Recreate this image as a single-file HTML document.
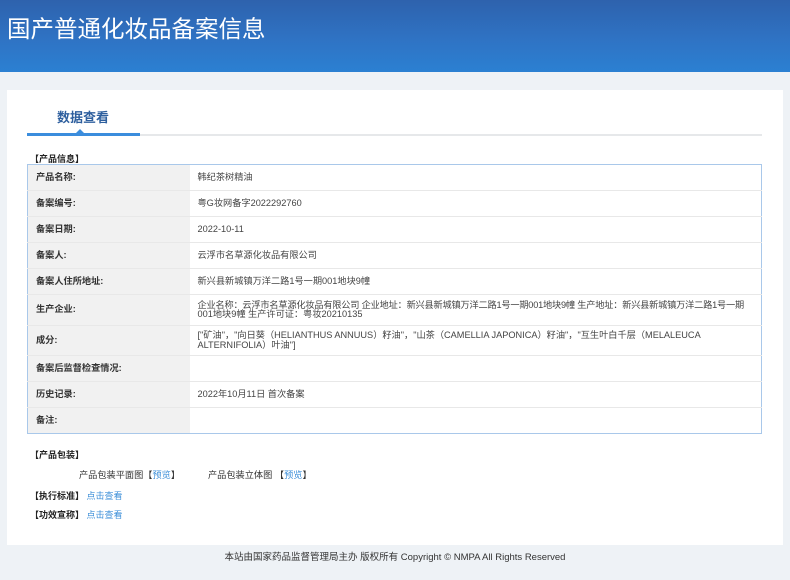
<!DOCTYPE html>
<html><head><meta charset="utf-8">
<style>
*{margin:0;padding:0;box-sizing:border-box}
body{width:790px;height:580px;overflow:hidden;background:#eef2f6;font-family:"Liberation Sans","Noto Sans CJK SC",sans-serif;color:#333;position:relative}
.hd{position:absolute;left:0;top:0;width:790px;height:72px;background:linear-gradient(180deg,#2e62ad 0%,#2f73c4 55%,#2b80d2 100%)}
.hd h1{position:absolute;left:7px;top:10px;font-size:23.5px;font-weight:normal;color:#fff}
.panel{position:absolute;left:7px;top:90px;width:776px;height:455px;background:#fff}
.tab{position:absolute;left:57px;top:107px;font-size:13px;font-weight:bold;color:#2e5f9e}
.line{position:absolute;left:27px;top:134px;width:735px;height:2px;background:#e6e8ea}
.line2{position:absolute;left:27px;top:133px;width:113px;height:3px;background:#3b8ddd}
.tri{position:absolute;left:76px;top:129px;width:0;height:0;border-left:4px solid transparent;border-right:4px solid transparent;border-bottom:4px solid #3b8ddd}
.sec{position:absolute;font-size:9px;font-weight:bold;color:#222}
table{position:absolute;left:27px;top:164px;width:735px;border-collapse:collapse;border:1px solid #a9c8ea;font-size:9.2px}
td{border-bottom:1px solid #e8e8e8;vertical-align:middle;line-height:9.5px}
td.l{width:162px;background:#f1f1f1;font-weight:bold;padding-left:8px;color:#333}
td.v{padding-left:8px;color:#444;white-space:nowrap;overflow:hidden}
a{color:#3d8fd8;text-decoration:none}
.t{position:absolute;font-size:9.2px;color:#333}
.ft{position:absolute;top:549px;left:0;width:790px;text-align:center;font-size:9.5px;color:#333}
</style></head><body>
<div class="hd"><h1>国产普通化妆品备案信息</h1></div>
<div class="panel"></div>
<div class="tab">数据查看</div>
<div class="line"></div><div class="line2"></div><div class="tri"></div>
<div class="sec" style="left:30px;top:152px">【产品信息】</div>
<table>
<tr style="height:26px"><td class="l">产品名称:</td><td class="v">韩纪茶树精油</td></tr>
<tr style="height:26px"><td class="l">备案编号:</td><td class="v">粤G妆网备字2022292760</td></tr>
<tr style="height:26px"><td class="l">备案日期:</td><td class="v">2022-10-11</td></tr>
<tr style="height:26px"><td class="l">备案人:</td><td class="v">云浮市名草源化妆品有限公司</td></tr>
<tr style="height:26px"><td class="l">备案人住所地址:</td><td class="v">新兴县新城镇万洋二路1号一期001地块9幢</td></tr>
<tr style="height:31px"><td class="l">生产企业:</td><td class="v"><span style="letter-spacing:-0.2px">企业名称：云浮市名草源化妆品有限公司 企业地址：新兴县新城镇万洋二路1号一期001地块9幢 生产地址：新兴县新城镇万洋二路1号一期</span><br>001地块9幢 生产许可证：粤妆20210135</td></tr>
<tr style="height:30px"><td class="l">成分:</td><td class="v">["矿油"，"向日葵（HELIANTHUS ANNUUS）籽油"，"山茶（CAMELLIA JAPONICA）籽油"，"互生叶白千层（MELALEUCA<br>ALTERNIFOLIA）叶油"]</td></tr>
<tr style="height:26px"><td class="l">备案后监督检查情况:</td><td class="v"></td></tr>
<tr style="height:26px"><td class="l">历史记录:</td><td class="v">2022年10月11日 首次备案</td></tr>
<tr style="height:26px"><td class="l" style="border-bottom:none">备注:</td><td class="v" style="border-bottom:none"></td></tr>
</table>
<div class="sec" style="left:30px;top:448px">【产品包装】</div>
<div class="t" style="left:79px;top:467px">产品包装平面图【<a>预览</a>】</div>
<div class="t" style="left:208px;top:467px">产品包装立体图 【<a>预览</a>】</div>
<div class="sec" style="left:30px;top:489px">【执行标准】 <a style="font-weight:normal">点击查看</a></div>
<div class="sec" style="left:30px;top:508px">【功效宣称】 <a style="font-weight:normal">点击查看</a></div>
<div class="ft">本站由国家药品监督管理局主办 版权所有 Copyright © NMPA All Rights Reserved</div>
</body></html>
